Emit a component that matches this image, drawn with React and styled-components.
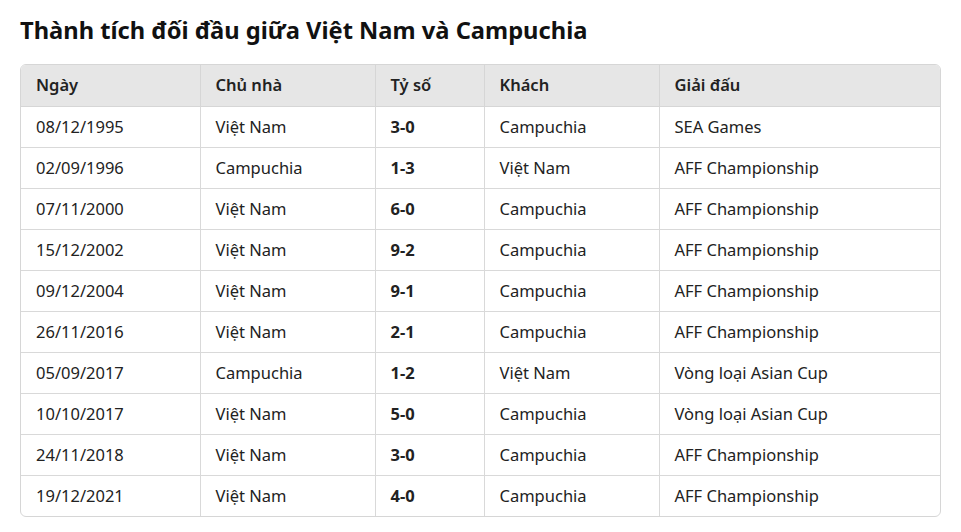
import React from "react";
import styled, { createGlobalStyle } from "styled-components";

const GlobalStyle = createGlobalStyle`
  html, body {
    margin: 0;
    padding: 0;
    background: #fff;
  }
  body {
    font-family: "Noto Sans", "Open Sans", sans-serif;
    color: #222;
  }
`;

const rows = [
  { date: "08/12/1995", home: "Việt Nam", score: "3-0", away: "Campuchia", cup: "SEA Games" },
  { date: "02/09/1996", home: "Campuchia", score: "1-3", away: "Việt Nam", cup: "AFF Championship" },
  { date: "07/11/2000", home: "Việt Nam", score: "6-0", away: "Campuchia", cup: "AFF Championship" },
  { date: "15/12/2002", home: "Việt Nam", score: "9-2", away: "Campuchia", cup: "AFF Championship" },
  { date: "09/12/2004", home: "Việt Nam", score: "9-1", away: "Campuchia", cup: "AFF Championship" },
  { date: "26/11/2016", home: "Việt Nam", score: "2-1", away: "Campuchia", cup: "AFF Championship" },
  { date: "05/09/2017", home: "Campuchia", score: "1-2", away: "Việt Nam", cup: "Vòng loại Asian Cup" },
  { date: "10/10/2017", home: "Việt Nam", score: "5-0", away: "Campuchia", cup: "Vòng loại Asian Cup" },
  { date: "24/11/2018", home: "Việt Nam", score: "3-0", away: "Campuchia", cup: "AFF Championship" },
  { date: "19/12/2021", home: "Việt Nam", score: "4-0", away: "Campuchia", cup: "AFF Championship" },
];

const Page = styled.div`
  padding: 14px 20px 16px 20px;
`;

const Title = styled.h2`
  margin: 0 0 18px 0;
  font-size: 23.7px;
  line-height: 32px;
  font-weight: 700;
  color: #111;
`;

const TableWrap = styled.div`
  border: 1px solid #d6d6d6;
  border-radius: 6px;
  overflow: hidden;
`;

const Table = styled.table`
  width: 100%;
  border-collapse: collapse;
  table-layout: fixed;
  font-size: 16.5px;
`;

const Th = styled.th`
  background: #e6e6e6;
  font-weight: 600;
  text-align: left;
  height: 39px;
  padding: 0 15px 2px 15px;
  color: #222;
  border-left: 1px solid #d6d6d6;
  border-bottom: 1px solid #d6d6d6;
  &:first-child { border-left: none; }
`;

const Td = styled.td`
  height: 38px;
  padding: 0 15px 2px 15px;
  border-left: 1px solid #d9d9d9;
  border-top: 1px solid #d9d9d9;
  font-weight: ${(p) => (p.bold ? 700 : 400)};
  color: #222;
  &:first-child { border-left: none; }
`;

const Row = styled.tr`
  &:first-child td { border-top: none; }
`;

const widths = [179, 175, 109, 175, 282];

export default function App() {
  return (
    <>
      <GlobalStyle />
      <Page>
        <Title>Thành tích đối đầu giữa Việt Nam và Campuchia</Title>
        <TableWrap>
          <Table>
            <colgroup>
              {widths.map((w, i) => (
                <col key={i} style={{ width: w }} />
              ))}
            </colgroup>
            <thead>
              <tr>
                <Th>Ngày</Th>
                <Th>Chủ nhà</Th>
                <Th>Tỷ số</Th>
                <Th>Khách</Th>
                <Th>Giải đấu</Th>
              </tr>
            </thead>
            <tbody>
              {rows.map((r) => (
                <Row key={r.date}>
                  <Td>{r.date}</Td>
                  <Td>{r.home}</Td>
                  <Td bold>{r.score}</Td>
                  <Td>{r.away}</Td>
                  <Td>{r.cup}</Td>
                </Row>
              ))}
            </tbody>
          </Table>
        </TableWrap>
      </Page>
    </>
  );
}
